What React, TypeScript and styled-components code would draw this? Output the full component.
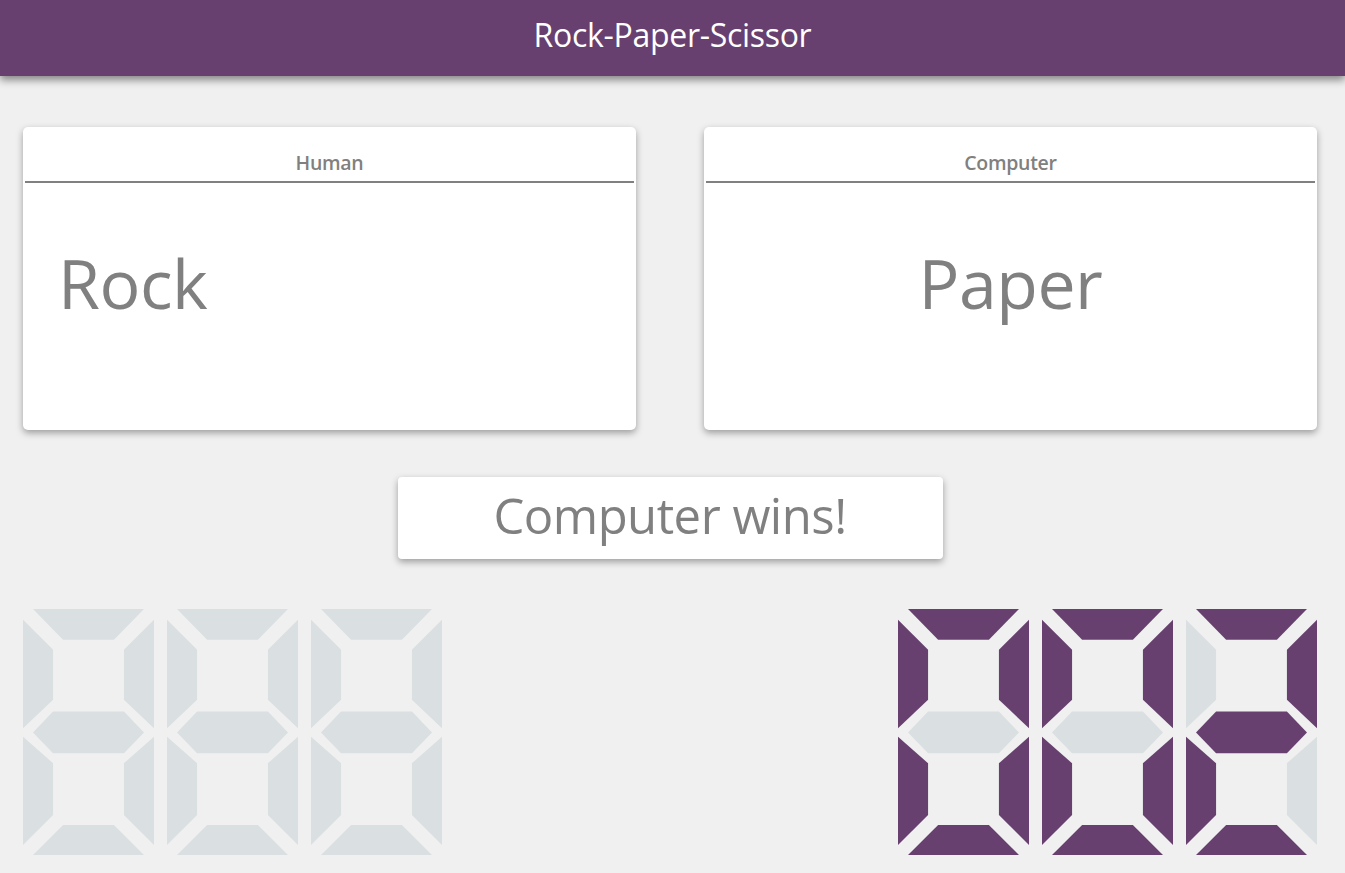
import React from "react";
import styled, { createGlobalStyle } from "styled-components";

const GlobalStyle = createGlobalStyle`
  html, body { margin: 0; padding: 0; background: #f0f0f0; }
  body { font-family: "Open Sans", "Noto Sans", sans-serif; }
  * { box-sizing: border-box; }
`;

const PURPLE = "#67406f";
const OFF = "#dadfe1";
const GREY = "#808080";

const Page = styled.div`
  min-height: 873px;
  background: #f0f0f0;
`;

const Header = styled.header`
  height: 76px;
  background: ${PURPLE};
  box-shadow: 0 4px 8px rgba(0, 0, 0, 0.45);
  display: flex;
  align-items: center;
  justify-content: center;
  padding-bottom: 8px;
`;

const Title = styled.h1`
  margin: 0;
  color: #ffffff;
  font-size: 32px;
  font-weight: 400;
  letter-spacing: -0.3px;
`;

const Main = styled.main`
  padding: 51px 28px 0 23px;
  display: flex;
  flex-direction: column;
`;

const Cards = styled.div`
  display: grid;
  grid-template-columns: 1fr 1fr;
  column-gap: 68px;
`;

const Card = styled.section`
  height: 303px;
  background: #ffffff;
  border-radius: 5px;
  box-shadow: 0 3px 7px rgba(0, 0, 0, 0.35);
  display: flex;
  flex-direction: column;
`;

const CardTitle = styled.h2`
  margin: 0 2px;
  height: 56px;
  border-bottom: 2px solid ${GREY};
  color: ${GREY};
  font-size: 19.5px;
  font-weight: 600;
  display: flex;
  align-items: center;
  justify-content: center;
  padding-top: 16px;
  letter-spacing: -0.3px;
`;

const Choice = styled.div<{ $align: "left" | "center" }>`
  padding: 59px 35px 0;
  color: ${GREY};
  font-size: 68px;
  line-height: 1.2;
  text-align: ${(p) => p.$align};
  letter-spacing: -0.5px;
`;

const ResultBox = styled.div`
  align-self: center;
  margin-top: 47px;
  width: 545px;
  height: 82px;
  background: #ffffff;
  border-radius: 4px;
  box-shadow: 0 3px 7px rgba(0, 0, 0, 0.35);
  display: flex;
  align-items: center;
  justify-content: center;
  color: ${GREY};
  font-size: 49px;
  letter-spacing: -0.5px;
  padding-bottom: 6px;
`;

const Scores = styled.div`
  margin-top: 50px;
  display: flex;
  justify-content: space-between;
`;

const Display = styled.div`
  display: flex;
  gap: 13px;
`;

const DigitSvg = styled.svg`
  display: block;
  width: 131px;
  height: 246px;
`;

// a(top), b(upper right), c(lower right), d(bottom), e(lower left), f(upper left), g(middle)
const SEGMENTS: Record<string, string> = {
  a: "30,0 362,0 272,92 120,92",
  b: "392,32 302,122 302,272 392,357",
  c: "392,383 302,462 302,617 392,707",
  d: "120,647 272,647 362,737 30,737",
  e: "0,383 90,462 90,617 0,707",
  f: "0,32 90,122 90,272 0,357",
  g: "30,370 90,307 302,307 362,370 302,432 90,432",
};

const DIGIT_MAP: Record<string, string> = {
  "0": "abcdef",
  "1": "bc",
  "2": "abdeg",
  "3": "abcdg",
  "4": "bcfg",
  "5": "acdfg",
  "6": "acdefg",
  "7": "abc",
  "8": "abcdefg",
  "9": "abcdfg",
  " ": "",
};

const Digit: React.FC<{ value: string }> = ({ value }) => {
  const lit = DIGIT_MAP[value] ?? "";
  return (
    <DigitSvg viewBox="0 0 392 737" preserveAspectRatio="none">
      {Object.entries(SEGMENTS).map(([k, pts]) => (
        <polygon key={k} points={pts} fill={lit.includes(k) ? PURPLE : OFF} />
      ))}
    </DigitSvg>
  );
};

const ScoreDisplay: React.FC<{ text: string }> = ({ text }) => (
  <Display>
    {text.split("").map((c, i) => (
      <Digit key={i} value={c} />
    ))}
  </Display>
);

export default function App() {
  return (
    <Page>
      <GlobalStyle />
      <Header>
        <Title>Rock-Paper-Scissor</Title>
      </Header>
      <Main>
        <Cards>
          <Card>
            <CardTitle>Human</CardTitle>
            <Choice $align="left">Rock</Choice>
          </Card>
          <Card>
            <CardTitle>Computer</CardTitle>
            <Choice $align="center">Paper</Choice>
          </Card>
        </Cards>
        <ResultBox>Computer wins!</ResultBox>
        <Scores>
          <ScoreDisplay text="   " />
          <ScoreDisplay text="002" />
        </Scores>
      </Main>
    </Page>
  );
}
